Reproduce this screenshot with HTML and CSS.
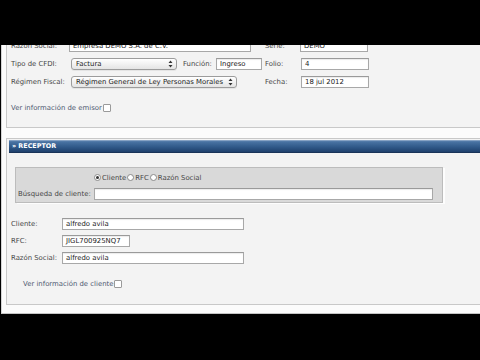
FILE: index.html
```html
<!DOCTYPE html>
<html>
<head>
<meta charset="utf-8">
<link rel="stylesheet" href="styles.css">
</head>
<body>
<div class="frame">
  <div class="panel emisor">
    <div class="row">
      <span class="lbl w58">Razón Social:</span>
      <span class="inp w182">Empresa DEMO S.A. de C.V.</span>
      <span class="lbl ml14 w35">Serie:</span>
      <span class="inp w68">DEMO</span>
    </div>
    <div class="row">
      <span class="lbl w60">Tipo de CFDI:</span>
      <span class="sel w106"><span>Factura</span><svg class="arr" width="5" height="8" viewBox="0 0 5 8"><path d="M2.5 0.5 L4.5 3 L0.5 3 Z M2.5 7.5 L4.5 5 L0.5 5 Z" fill="#333"/></svg></span>
      <span class="lbl ml6 w33">Función:</span>
      <span class="inp w46">Ingreso</span>
      <span class="lbl ml3 w36">Folio:</span>
      <span class="inp w68">4</span>
    </div>
    <div class="row">
      <span class="lbl w60">Régimen Fiscal:</span>
      <span class="sel w166"><span>Régimen General de Ley Personas Morales</span><svg class="arr" width="5" height="8" viewBox="0 0 5 8"><path d="M2.5 0.5 L4.5 3 L0.5 3 Z M2.5 7.5 L4.5 5 L0.5 5 Z" fill="#333"/></svg></span>
      <span class="lbl ml28 w36">Fecha:</span>
      <span class="inp w68">18 jul 2012</span>
    </div>
    <div class="ver emisor-ver">Ver información de emisor<span class="chk"></span></div>
  </div>

  <div class="panel receptor">
    <div class="hdr">» RECEPTOR</div>
    <div class="sbox">
      <div class="radios">
        <span class="radio on"></span><span class="rlbl">Cliente</span>
        <span class="radio"></span><span class="rlbl">RFC</span>
        <span class="radio"></span><span class="rlbl">Razón Social</span>
      </div>
      <div class="srow">
        <span class="lbl w76">Búsqueda de cliente:</span>
        <span class="inp w339"></span>
      </div>
    </div>
    <div class="crows">
      <div class="crow">
        <span class="lbl w51">Cliente:</span>
        <span class="inp w182">alfredo avila</span>
      </div>
      <div class="crow">
        <span class="lbl w51">RFC:</span>
        <span class="inp w68">JIGL700925NQ7</span>
      </div>
      <div class="crow">
        <span class="lbl w51">Razón Social:</span>
        <span class="inp w182">alfredo avila</span>
      </div>
    </div>
    <div class="ver cliente-ver">Ver información de cliente<span class="chk"></span></div>
  </div>
</div>
</body>
</html>
```

FILE: styles.css
```css
html, body {
  margin: 0;
  padding: 0;
  background: #000;
}
body {
  width: 480px;
  height: 360px;
  overflow: hidden;
  font-family: "DejaVu Sans", Verdana, sans-serif;
}
.frame {
  margin: 45px 0 0 1px;
  height: 268px;
  border-left: 1px solid #d4d4d4;
  border-bottom: 1px solid #c4c4c4;
  background: #fbfbfb;
  padding-left: 4px;
  overflow: hidden;
}
.panel {
  border-left: 1px solid #c8c8c8;
  border-bottom: 1px solid #c8c8c8;
  background: #f3f3f3;
}
.emisor {
  margin-top: -8px;
  padding: 0 0 14px 4px;
}
.row {
  display: flex;
  align-items: center;
  height: 18px;
}
.lbl {
  flex: none;
  font-size: 6.9px;
  color: #474747;
  white-space: nowrap;
}
.inp {
  flex: none;
  display: block;
  box-sizing: border-box;
  height: 12px;
  border: 1px solid #a8a8a8;
  border-top-color: #9a9a9a;
  background: #fff;
  box-shadow: inset 0 1px 1px rgba(0,0,0,0.08);
  font-size: 6.9px;
  line-height: 10px;
  padding-left: 3px;
  color: #222;
  white-space: nowrap;
  overflow: hidden;
}
.sel {
  flex: none;
  box-sizing: border-box;
  height: 12px;
  border: 1px solid #9c9c9c;
  border-radius: 3px;
  background: linear-gradient(#ffffff, #e4e4e4);
  box-shadow: 0 1px 0 rgba(0,0,0,0.06);
  display: flex;
  align-items: center;
  justify-content: space-between;
  padding: 0 3px 0 4px;
  font-size: 6.9px;
  color: #222;
  white-space: nowrap;
}
.arr { display: block; }
.w33 { width: 33px; }
.w35 { width: 35px; }
.w36 { width: 36px; }
.w46 { width: 46px; }
.w51 { width: 51px; }
.w58 { width: 58px; }
.w60 { width: 60px; }
.w68 { width: 68px; }
.w76 { width: 76px; }
.w106 { width: 106px; }
.w166 { width: 166px; }
.w182 { width: 182px; }
.w339 { width: 339px; }
.ml3 { margin-left: 3px; }
.ml6 { margin-left: 6px; }
.ml14 { margin-left: 14px; }
.ml28 { margin-left: 28px; }

.ver {
  height: 10px;
  line-height: 10px;
  font-size: 6.9px;
  color: #4f5a72;
  display: flex;
  align-items: center;
  white-space: nowrap;
}
.emisor-ver { margin-top: 12px; }
.chk {
  display: block;
  width: 6px;
  height: 6px;
  margin-left: 1px;
  border: 1px solid #9a9a9a;
  border-radius: 1px;
  background: #fff;
}

.receptor {
  margin-top: 10px;
  border-top: 1px solid #c8c8c8;
  padding: 1px 0 15px 2px;
}
.hdr {
  height: 13px;
  line-height: 13px;
  padding-left: 3px;
  font-size: 6.4px;
  font-weight: bold;
  color: #fff;
  background: linear-gradient(#86a2c4 0, #86a2c4 8%, #4a74a4 12%, #2f5888 55%, #1f416d 90%, #142a4a 100%);
}
.sbox {
  margin: 14px 0 0 6px;
  width: 428px;
  height: 36px;
  box-sizing: border-box;
  border: 1px solid #bcbcbc;
  background: #d9d9d9;
  box-shadow: 2px 1px 0 #fdfdfd;
  padding: 4px 0 2px 2px;
}
.radios {
  display: flex;
  align-items: center;
  height: 11px;
  padding-left: 76px;
}
.radio {
  flex: none;
  width: 7px;
  height: 7px;
  box-sizing: border-box;
  border: 1px solid #8a8a8a;
  border-radius: 50%;
  background: #fff;
  display: flex;
  align-items: center;
  justify-content: center;
}
.radio.on::after {
  content: "";
  width: 3px;
  height: 3px;
  border-radius: 50%;
  background: #333;
}
.rlbl {
  font-size: 6.9px;
  color: #474747;
  margin: 0 1px 0 1px;
  white-space: nowrap;
}
.srow {
  display: flex;
  align-items: center;
  height: 12px;
  margin-top: 5px;
}
.crows {
  margin-top: 12px;
  padding-left: 2px;
}
.crow {
  display: flex;
  align-items: center;
  height: 17px;
}
.cliente-ver {
  margin-top: 13px;
  padding-left: 14px;
}
```
